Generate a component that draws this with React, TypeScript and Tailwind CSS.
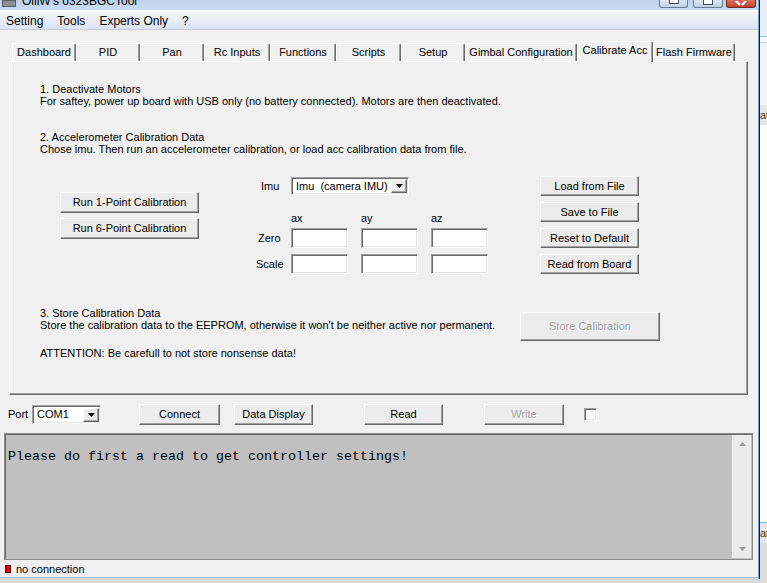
import React from "react";

const raised =
  "bg-[#ececec] border border-t-white border-l-white border-r-[#696969] border-b-[#696969] shadow-[inset_-1px_-1px_0_#a0a0a0]";
const sunken =
  "bg-white border border-t-[#a0a0a0] border-l-[#a0a0a0] border-r-white border-b-white shadow-[inset_1px_1px_0_#696969,inset_-1px_-1px_0_#e3e3e3]";

function Btn({
  children,
  className = "",
  disabled = false,
}: {
  children: React.ReactNode;
  className?: string;
  disabled?: boolean;
}) {
  return (
    <div
      className={`flex items-center justify-center text-[11px] leading-none ${raised} ${
        disabled ? "text-[#a0a0a0] [text-shadow:1px_1px_0_#ffffff]" : "text-black"
      } ${className}`}
    >
      {children}
    </div>
  );
}

function DownArrow() {
  return (
    <svg width="7" height="4" viewBox="0 0 7 4">
      <path d="M0 0 H7 L3.5 4 Z" fill="#000" />
    </svg>
  );
}

function Select({ text, className = "" }: { text: string; className?: string }) {
  return (
    <div className={`flex items-center ${sunken} ${className}`}>
      <div className="flex-1 pl-[4px] text-[11px] leading-none text-black whitespace-pre">{text}</div>
      <div className={`w-[16px] h-[14px] mr-[1px] flex items-center justify-center ${raised}`}>
        <DownArrow />
      </div>
    </div>
  );
}

function Field() {
  return <div className={`w-[57px] h-[20px] ${sunken}`} />;
}

const tabs: [string, number][] = [
  ["Dashboard", 64],
  ["PID", 64],
  ["Pan", 64],
  ["Rc Inputs", 66],
  ["Functions", 66],
  ["Scripts", 65],
  ["Setup", 64],
  ["Gimbal Configuration", 112],
  ["Calibrate Acc", 76],
  ["Flash Firmware", 82],
];

export default function App() {
  return (
    <div className="w-[767px] h-[583px] flex items-start overflow-hidden bg-[#d9d9d9] font-['Liberation_Sans',Arial,sans-serif]">
      {/* Window */}
      <div className="w-[758px] h-[578px] flex flex-col bg-[#f0f0f0] border-b border-[#9fbfdf]">
        {/* Title bar */}
        <div className="h-[10px] shrink-0 flex items-start bg-gradient-to-b from-[#bcd2ea] to-[#c9dcf1] overflow-hidden">
          <div className="ml-[2px] mt-0 w-[14px] h-[7px] bg-[#8a8f96] border border-[#5a5f66]" />
          <div className="ml-[6px] -mt-[5px] text-[12px] leading-[12px] text-black whitespace-nowrap">OlliW's o323BGCTool</div>
          <div className="flex-1" />
          <div className="w-[29px] h-[8px] rounded-b-[3px] border border-t-0 border-[#6b7d93] bg-gradient-to-b from-[#dde7f3] to-[#c3d1e3] flex justify-center">
            <div className="w-[10px] h-[4px] bg-white border border-[#3c4a5c] border-t-0" />
          </div>
          <div className="ml-[5px] w-[30px] h-[8px] rounded-b-[3px] border border-t-0 border-[#6b7d93] bg-gradient-to-b from-[#dde7f3] to-[#c3d1e3] flex justify-center">
            <div className="w-[10px] h-[5px] bg-white border border-[#3c4a5c] border-t-0" />
          </div>
          <div className="ml-[3px] mr-[2px] w-[30px] h-[8px] rounded-b-[3px] border border-t-0 border-[#7a2a20] bg-gradient-to-b from-[#d8705f] to-[#c0402f] flex justify-center items-end">
            <svg width="12" height="6" viewBox="0 0 12 6">
              <path d="M1 0 L5 4 M11 0 L7 4" stroke="#fff" strokeWidth="2.2" />
            </svg>
          </div>
        </div>
        {/* Menu bar */}
        <div className="h-[20px] shrink-0 flex items-center gap-[14px] pl-[6px] pt-[2px] bg-gradient-to-b from-[#f3f6fb] to-[#dce3f1] border-t border-white border-b border-b-[#c5cbd8] text-[12px] text-black">
          <span>Setting</span>
          <span>Tools</span>
          <span>Experts Only</span>
          <span>?</span>
        </div>

        {/* Body */}
        <div className="flex-1 flex flex-col">
          {/* Tabs */}
          <div className="mt-[11px] ml-[12px] h-[20px] shrink-0 flex items-end">
            {tabs.map(([t, w]) => {
              const sel = t === "Calibrate Acc";
              return (
                <div
                  key={t}
                  style={{ width: w }}
                  className={`flex items-center justify-center whitespace-nowrap text-[11px] text-black bg-[#f0f0f0] border-t border-l border-t-white border-l-white border-r border-r-[#696969] shadow-[inset_-1px_0_0_#a0a0a0] rounded-t-[2px] ${
                    sel ? "h-[21px] -mb-[1px] relative z-10 pb-[3px]" : "h-[18px]"
                  }`}
                >
                  {t}
                </div>
              );
            })}
          </div>

          {/* Panel */}
          <div className="ml-[9px] w-[739px] h-[334px] shrink-0 border border-t-white border-l-white border-r-[#696969] border-b-[#696969] shadow-[inset_-1px_-1px_0_#a0a0a0] flex flex-col pl-[30px] pt-[21px] text-[11px] leading-[12px] text-black">
            <div>1. Deactivate Motors</div>
            <div>For saftey, power up board with USB only (no battery connected). Motors are then deactivated.</div>
            <div className="mt-[24px]">2. Accelerometer Calibration Data</div>
            <div>Chose imu. Then run an accelerometer calibration, or load acc calibration data from file.</div>

            <div className="mt-[21px] h-[98px] flex items-start">
              <div className="ml-[20px] mt-[16px] flex flex-col gap-[5px]">
                <Btn className="w-[139px] h-[21px]">Run 1-Point Calibration</Btn>
                <Btn className="w-[139px] h-[21px]">Run 6-Point Calibration</Btn>
              </div>

              <div className="ml-[56px] w-[233px] flex flex-col">
                <div className="mt-[1px] flex items-center h-[18px]">
                  <div className="w-[36px] pl-[6px]">Imu</div>
                  <Select text="Imu  (camera IMU)" className="w-[118px] h-[18px]" />
                </div>
                <div className="mt-[17px] h-[12px] flex">
                  <div className="w-[36px]" />
                  <div className="w-[70px]">ax</div>
                  <div className="w-[70px]">ay</div>
                  <div className="w-[57px]">az</div>
                </div>
                <div className="mt-[4px] flex items-center h-[20px]">
                  <div className="w-[36px] pl-[3px]">Zero</div>
                  <div className="flex gap-[13px]">
                    <Field />
                    <Field />
                    <Field />
                  </div>
                </div>
                <div className="mt-[6px] flex items-center h-[20px]">
                  <div className="w-[36px] pl-[1px]">Scale</div>
                  <div className="flex gap-[13px]">
                    <Field />
                    <Field />
                    <Field />
                  </div>
                </div>
              </div>

              <div className="ml-[52px] flex flex-col gap-[6px]">
                <Btn className="w-[99px] h-[20px]">Load from File</Btn>
                <Btn className="w-[99px] h-[20px]">Save to File</Btn>
                <Btn className="w-[99px] h-[20px]">Reset to Default</Btn>
                <Btn className="w-[99px] h-[20px]">Read from Board</Btn>
              </div>
            </div>

            <div className="mt-[33px] flex items-start">
              <div className="w-[480px] flex flex-col">
                <div>3. Store Calibration Data</div>
                <div>Store the calibration data to the EEPROM, otherwise it won't be neither active nor permanent.</div>
                <div className="mt-[16px]">ATTENTION: Be carefull to not store nonsense data!</div>
              </div>
              <Btn disabled className="mt-[5px] w-[140px] h-[29px]">
                Store Calibration
              </Btn>
            </div>
          </div>

          {/* Bottom controls */}
          <div className="mt-[9px] h-[21px] shrink-0 flex items-center text-[11px] text-black">
            <div className="ml-[8px] w-[24px]">Port</div>
            <Select text="COM1" className="w-[69px] h-[19px]" />
            <Btn className="ml-[38px] w-[81px] h-[21px]">Connect</Btn>
            <Btn className="ml-[14px] w-[79px] h-[21px]">Data Display</Btn>
            <Btn className="ml-[51px] w-[79px] h-[21px]">Read</Btn>
            <Btn disabled className="ml-[41px] w-[80px] h-[21px]">
              Write
            </Btn>
            <div className={`ml-[20px] w-[13px] h-[13px] ${sunken}`} />
          </div>

          {/* Output */}
          <div className="mt-[8px] ml-[4px] w-[749px] h-[127px] shrink-0 flex bg-[#c0c0c0] border border-[#8a8a8a] shadow-[inset_1px_1px_0_#696969]">
            <div className="flex-1 pl-[3px] pt-[15px] font-['Liberation_Mono','Courier_New',monospace] text-[13.33px] leading-[15px] text-black whitespace-nowrap">
              Please do first a read to get controller settings!
            </div>
            <div className="w-[19px] mt-[1px] mb-[1px] mr-[1px] bg-[#ebebeb] border-l border-[#f7f7f7] flex flex-col items-center justify-between py-[7px]">
              <svg width="7" height="4" viewBox="0 0 7 4">
                <path d="M0 4 H7 L3.5 0 Z" fill="#9a9a9a" />
              </svg>
              <svg width="7" height="4" viewBox="0 0 7 4">
                <path d="M0 0 H7 L3.5 4 Z" fill="#9a9a9a" />
              </svg>
            </div>
          </div>

          {/* Status bar */}
          <div className="flex-1 flex items-center pt-[1px] text-[11px] text-black">
            <div className="ml-[5px] w-[6px] h-[8px] bg-[#e00000] border border-[#6a0000]" />
            <div className="ml-[5px]">no connection</div>
          </div>
        </div>
      </div>
      {/* Window frame right */}
      <div className="w-[1px] h-[579px] bg-[#6fa2d6]" />
      <div className="w-[1px] h-[579px] bg-[#1a1a1a]" />
      {/* Outside strip */}
      <div className="w-[7px] h-[583px] flex flex-col bg-[#f2f5fa] overflow-hidden text-[11px] text-[#333]">
        <div className="h-[36px] bg-[#e9eff7]" />
        <div className="h-[1px] bg-[#9cc0e4]" />
        <div className="h-[5px] bg-[#f7f9fc]" />
        <div className="h-[1px] bg-[#b9d0e8]" />
        <div className="h-[62px]" />
        <div className="h-[20px] bg-[#e6e6e6] flex items-center whitespace-nowrap">at</div>
        <div className="h-[397px] bg-[#fbfbfb]" />
        <div className="h-[1px] bg-[#8fb6e0]" />
        <div className="h-[20px] bg-[#e8e8e8] flex items-center whitespace-nowrap">at</div>
        <div className="flex-1 bg-[#dcdcdc]" />
      </div>
    </div>
  );
}
